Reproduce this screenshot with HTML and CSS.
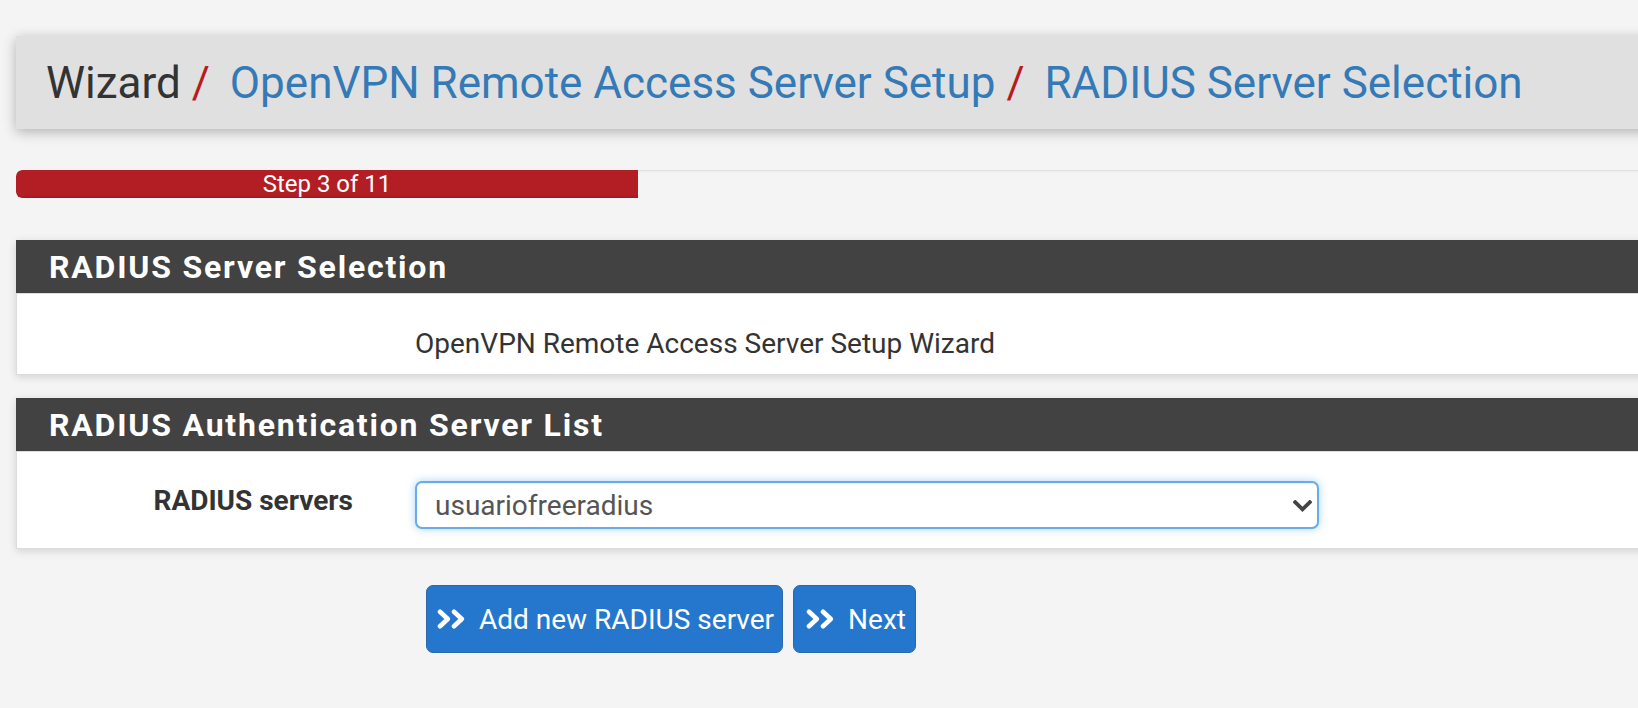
FILE: index.html
```html
<!DOCTYPE html>
<html lang="en">
<head>
<meta charset="utf-8">
<title>Wizard / OpenVPN Remote Access Server Setup / RADIUS Server Selection</title>
<link rel="stylesheet" href="styles.css">
</head>
<body>
<div class="page">
  <div class="header">
    <ol class="breadcrumb">
      <li>Wizard</li>
      <li><a href="#">OpenVPN Remote Access Server Setup</a></li>
      <li><a href="#">RADIUS Server Selection</a></li>
    </ol>
  </div>

  <div class="progress">
    <div class="progress-bar" style="width: 622px">Step 3 of 11</div>
  </div>

  <div class="panel">
    <div class="panel-heading"><h2 class="panel-title">RADIUS Server Selection</h2></div>
    <div class="panel-body panel-body-intro">
      <p class="intro">OpenVPN Remote Access Server Setup Wizard</p>
    </div>
  </div>

  <div class="panel">
    <div class="panel-heading"><h2 class="panel-title">RADIUS Authentication Server List</h2></div>
    <div class="panel-body panel-body-form">
      <div class="form-row">
        <label class="control-label" for="authserv">RADIUS servers</label>
        <div class="select-wrap">
          <select id="authserv" class="form-select">
            <option>usuariofreeradius</option>
          </select>
          <svg class="select-caret" width="19" height="12" viewBox="0 0 19 12" aria-hidden="true">
            <path d="M2.2 2.2 L9.5 9.3 L16.8 2.2" fill="none" stroke="#444" stroke-width="3.8" stroke-linecap="square"/>
          </svg>
        </div>
      </div>
    </div>
  </div>

  <div class="actions">
    <button class="btn" type="button">
      <svg class="btn-icon" width="28" height="20" viewBox="0 0 28 20" aria-hidden="true">
        <path d="M3 2.8 L10.8 10 L3 17.2 M17 2.8 L24.8 10 L17 17.2" fill="none" stroke="#fff" stroke-width="4.6" stroke-linecap="round" stroke-linejoin="round"/>
      </svg>
      <span>Add new RADIUS server</span>
    </button>
    <button class="btn btn-next" type="button">
      <svg class="btn-icon" width="28" height="20" viewBox="0 0 28 20" aria-hidden="true">
        <path d="M3 2.8 L10.8 10 L3 17.2 M17 2.8 L24.8 10 L17 17.2" fill="none" stroke="#fff" stroke-width="4.6" stroke-linecap="round" stroke-linejoin="round"/>
      </svg>
      <span>Next</span>
    </button>
  </div>
</div>
</body>
</html>
```

FILE: styles.css
```css
html, body {
  margin: 0;
  padding: 0;
  overflow: hidden;
}

body {
  background: #f4f4f4;
  font-family: Roboto, "Liberation Sans", sans-serif;
  color: #333;
}

.page {
  padding: 36px 0 0 16px;
  margin-right: -60px;
}

/* Header / breadcrumb */
.header {
  height: 93px;
  background: #e0e0e0;
  box-shadow: 0 3px 12px rgba(0, 0, 0, 0.28);
  display: flex;
  align-items: center;
  padding-left: 30px;
}

.breadcrumb {
  margin: 0;
  padding: 0;
  list-style: none;
  font-size: 44px;
  line-height: 1;
  font-weight: 400;
  white-space: nowrap;
}

.breadcrumb li {
  display: inline-block;
  color: #333;
}

.breadcrumb li + li::before {
  content: "/\00a0";
  padding: 0 9px 0 0;
  color: #b71c1c;
}

.breadcrumb a {
  color: #337ab7;
  text-decoration: none;
}

/* Progress */
.progress {
  margin-top: 41px;
  height: 28px;
  background: #f4f4f4;
  box-shadow: inset 0 1px 2px rgba(0, 0, 0, 0.1);
  border-radius: 6px 0 0 6px;
  overflow: hidden;
}

.progress-bar {
  height: 28px;
  background: #b31e24;
  border-radius: 6px 0 0 6px;
  color: #fff;
  font-size: 24px;
  line-height: 28px;
  text-align: center;
  box-shadow: inset 0 -2px 0 rgba(0, 0, 0, 0.08);
}

/* Panels */
.panel {
  margin-top: 42px;
  box-shadow: 0 2px 8px rgba(0, 0, 0, 0.14);
}

.panel + .panel {
  margin-top: 23px;
}

.panel-heading {
  background: #424242;
  height: 53px;
  display: flex;
  align-items: center;
  padding-left: 33px;
}

.panel-title {
  margin: 0;
  color: #fff;
  font-size: 32px;
  font-weight: 700;
  letter-spacing: 1.8px;
  line-height: 1;
}

.panel-body {
  background: #fff;
  border: 1px solid #dcdcdc;
}

.panel-body-intro {
  padding: 33px 0 13px 398px;
}

.intro {
  margin: 0;
  font-size: 28px;
  line-height: 34px;
  color: #333;
}

.panel-body-form {
  padding: 29px 0 19px 0;
}

.form-row {
  display: flex;
  align-items: flex-start;
  gap: 62px;
}

.control-label {
  width: 336px;
  text-align: right;
  font-size: 28px;
  font-weight: 700;
  line-height: 30px;
  padding-top: 5px;
  color: #333;
}

.select-wrap {
  position: relative;
  width: 904px;
}

.form-select {
  display: block;
  width: 100%;
  height: 48px;
  box-sizing: border-box;
  appearance: none;
  -webkit-appearance: none;
  background: #fff;
  border: 2px solid #66adea;
  border-radius: 7px;
  box-shadow: inset 0 1px 1px rgba(0, 0, 0, 0.075), 0 0 9px rgba(102, 175, 233, 0.55);
  padding: 0 50px 0 18px;
  font-family: Roboto, "Liberation Sans", sans-serif;
  font-size: 28px;
  color: #555;
  outline: none;
}

.select-caret {
  position: absolute;
  right: 7px;
  top: 19px;
  pointer-events: none;
}

/* Buttons */
.actions {
  display: flex;
  gap: 10px;
  margin: 36px 0 0 410px;
}

.btn {
  display: inline-flex;
  align-items: center;
  gap: 14px;
  height: 68px;
  box-sizing: border-box;
  padding: 0 8px 0 10px;
  background: #2577cd;
  border: 1px solid #2a68a8;
  border-radius: 7px;
  color: #fff;
  font-family: Roboto, "Liberation Sans", sans-serif;
  font-size: 28px;
  font-weight: 400;
  cursor: pointer;
}

.btn-next {
  padding-left: 12px;
  padding-right: 9px;
}

.btn-icon {
  display: block;
  flex: none;
}
```
